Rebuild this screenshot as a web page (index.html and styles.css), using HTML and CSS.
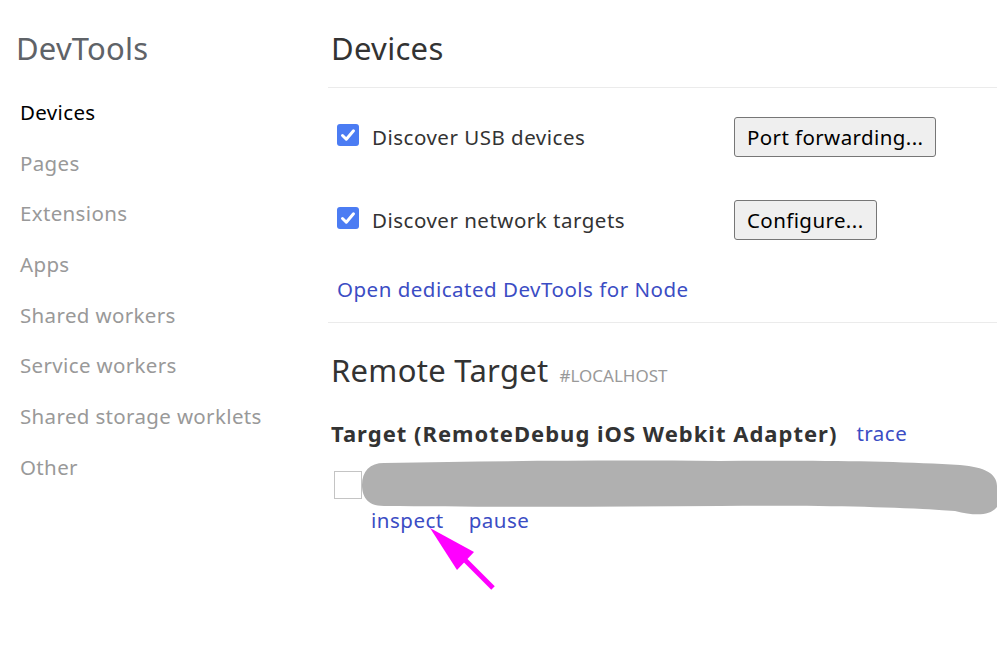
FILE: index.html
```html
<!DOCTYPE html>
<html>
<head>
<meta charset="utf-8">
<link rel="stylesheet" href="styles.css">
</head>
<body>
<div class="page">
  <aside class="sidebar">
    <h1 class="brand">DevTools</h1>
    <nav class="nav">
      <div class="nav-item active">Devices</div>
      <div class="nav-item">Pages</div>
      <div class="nav-item">Extensions</div>
      <div class="nav-item">Apps</div>
      <div class="nav-item">Shared workers</div>
      <div class="nav-item">Service workers</div>
      <div class="nav-item">Shared storage worklets</div>
      <div class="nav-item">Other</div>
    </nav>
  </aside>
  <main class="main">
    <header class="section-head">
      <h2 class="title">Devices</h2>
    </header>
    <div class="devices">
      <div class="row">
        <label class="check-label">
          <span class="checkbox checked"><svg viewBox="0 0 22 22" width="22" height="22"><path d="M5.5 11.5 L9.3 15.2 L16.5 6.8" fill="none" stroke="#fff" stroke-width="3" stroke-linecap="round" stroke-linejoin="round"/></svg></span>
          <span>Discover USB devices</span>
        </label>
        <button class="btn">Port forwarding...</button>
      </div>
      <div class="row">
        <label class="check-label">
          <span class="checkbox checked"><svg viewBox="0 0 22 22" width="22" height="22"><path d="M5.5 11.5 L9.3 15.2 L16.5 6.8" fill="none" stroke="#fff" stroke-width="3" stroke-linecap="round" stroke-linejoin="round"/></svg></span>
          <span>Discover network targets</span>
        </label>
        <button class="btn">Configure...</button>
      </div>
      <div class="node-row">
        <a class="link">Open dedicated DevTools for Node</a>
      </div>
    </div>
    <section class="remote">
      <div class="remote-head">
        <h2 class="title">Remote Target</h2>
        <span class="host">#LOCALHOST</span>
      </div>
      <div class="target-title">
        <span class="target-name">Target (RemoteDebug iOS Webkit Adapter)</span>
        <a class="link">trace</a>
      </div>
      <div class="target-item">
        <span class="favicon"></span>
      </div>
      <div class="actions">
        <a class="link">inspect</a>
        <a class="link">pause</a>
      </div>
    </section>
  </main>
  <svg class="overlay" width="997" height="655" viewBox="0 0 997 655">
    <path d="M384 463 C 500 461, 600 460, 720 461 C 820 460, 900 461, 960 465 C 985 467, 997 474, 997 486 L 997 507 C 990 516, 975 516, 955 511 C 900 507, 820 505, 720 506 C 600 507, 480 507, 384 506 C 366 506, 362 495, 362 485 C 362 471, 370 463, 384 463 Z" fill="#b0b0b0"/>
    <polygon points="430,528 474,552 457,570" fill="#ff00ff"/>
    <line x1="464" y1="559" x2="493" y2="588" stroke="#ff00ff" stroke-width="5"/>
  </svg>
</div>
</body>
</html>
```
FILE: styles.css
```css
html, body {
  margin: 0;
  padding: 0;
  background: #fff;
}
body {
  font-family: "Noto Sans", "Open Sans", sans-serif;
  color: #333;
}
.page {
  position: relative;
  display: flex;
  width: 997px;
  height: 655px;
  overflow: hidden;
}
.sidebar {
  width: 312px;
  flex: none;
  padding-left: 16px;
}
.brand {
  margin: 26px 0 0 0;
  font-size: 31px;
  line-height: 44px;
  font-weight: 400;
  color: #5f6368;
  letter-spacing: 0.2px;
}
.nav {
  margin-top: 17px;
  padding-left: 4px;
}
.nav-item {
  height: 50.7px;
  line-height: 50.7px;
  font-size: 20.5px;
  color: #999;
  letter-spacing: 0.35px;
}
.nav-item.active {
  color: #000;
}
.main {
  flex: 1;
  min-width: 0;
}
.section-head {
  height: 88px;
  box-sizing: border-box;
  border-bottom: 1px solid #ebebeb;
  display: flex;
  align-items: center;
  padding-left: 3px;
  padding-top: 8px;
}
.title {
  margin: 0;
  font-size: 31px;
  font-weight: 400;
  color: #333;
  letter-spacing: 0.3px;
  line-height: 46px;
}
.devices {
  padding-left: 9px;
  padding-bottom: 5px;
  border-bottom: 1px solid #ebebeb;
}
.row {
  display: flex;
  align-items: center;
  height: 83px;
}
.row:first-child {
  margin-top: 7px;
}
.check-label {
  display: flex;
  align-items: center;
  width: 397px;
  flex: none;
  font-size: 20.5px;
  color: #333;
  letter-spacing: 0.5px;
}
.checkbox {
  width: 22px;
  height: 22px;
  border-radius: 3px;
  background: #4b7cf3;
  margin-right: 13px;
  margin-top: -4px;
  display: inline-flex;
  flex: none;
}
.btn {
  font-family: inherit;
  font-size: 20.5px;
  letter-spacing: 0.4px;
  color: #000;
  background: #efefef;
  border: 1px solid #767676;
  border-radius: 3px;
  height: 40px;
  padding: 0 12px;
  line-height: 36px;
  white-space: nowrap;
  flex: none;
}
.node-row {
  height: 56px;
  display: flex;
  align-items: center;
}
.link {
  color: #3b4dc4;
  font-size: 20.5px;
  letter-spacing: 0.5px;
  cursor: pointer;
}
.remote {
  padding-left: 3px;
}
.remote-head {
  display: flex;
  align-items: baseline;
  height: 46px;
  margin-top: 24px;
}
.host {
  margin-left: 11px;
  font-size: 17px;
  color: #999;
}
.target-title {
  display: flex;
  align-items: center;
  margin-top: 23px;
  height: 34px;
}
.target-name {
  font-size: 22px;
  font-weight: 700;
  color: #333;
  letter-spacing: 1px;
  margin-right: 19px;
}
.target-item {
  height: 28px;
  margin-top: 21px;
  display: flex;
  align-items: center;
}
.favicon {
  width: 26px;
  height: 26px;
  border: 1px solid #c4c4c4;
  margin-left: 3px;
}
.actions {
  display: flex;
  gap: 25px;
  padding-left: 40px;
  margin-top: 6px;
  height: 30px;
  align-items: center;
}
.overlay {
  position: absolute;
  left: 0;
  top: 0;
  pointer-events: none;
}
```
